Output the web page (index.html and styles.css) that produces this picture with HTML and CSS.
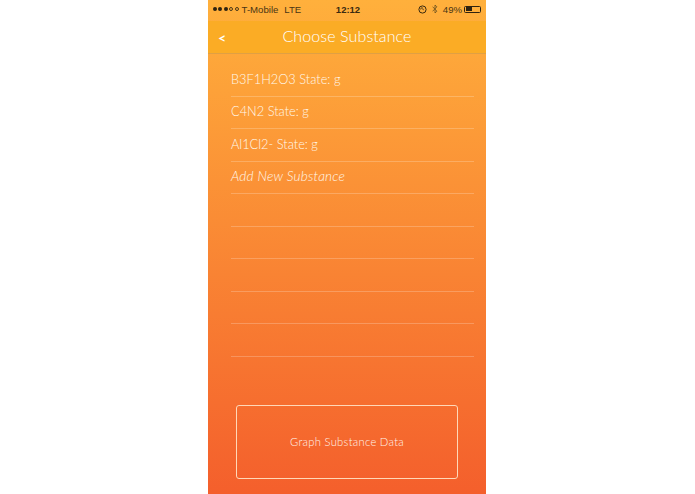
FILE: index.html
```html
<!DOCTYPE html>
<html lang="en">
<head>
<meta charset="utf-8">
<title>Choose Substance</title>
<link rel="stylesheet" href="styles.css">
</head>
<body>
<main class="phone">
  <div class="status">
    <div class="status-left">
      <span class="signal"><i class="dot"></i><i class="dot"></i><i class="dot"></i><i class="dot off"></i><i class="dot off"></i></span>
      <span class="carrier">T-Mobile</span>
      <span class="network">LTE</span>
    </div>
    <div class="clock">12:12</div>
    <div class="status-right">
      <svg class="lock" viewBox="0 0 9 9" width="9" height="9"><circle cx="4.5" cy="4.5" r="3.6" fill="none" stroke="#3a2a10" stroke-width="1"/><path d="M4.5 2.4v2.1l1.6 1z" fill="#3a2a10"/><path d="M2.6 4.5a1.9 1.9 0 0 1 1.9-1.9" fill="none" stroke="#3a2a10" stroke-width=".8"/></svg>
      <svg class="bt" viewBox="0 0 6 10" width="6" height="10"><path d="M.6 2.7l4.3 4.5L3 9V1l1.9 1.8L.6 7.3" fill="none" stroke="#6b5020" stroke-width=".8"/></svg>
      <span class="pct">49%</span>
      <span class="battery"><span class="battery-fill"></span></span>
    </div>
  </div>
  <header class="nav">
    <span class="back">&lt;</span>
    <h1 class="title">Choose Substance</h1>
  </header>
  <ul class="list">
    <li class="row">B3F1H2O3 State: g</li>
    <li class="row">C4N2 State: g</li>
    <li class="row">Al1Cl2- State: g</li>
    <li class="row add">Add New Substance</li>
    <li class="row"></li>
    <li class="row"></li>
    <li class="row"></li>
    <li class="row"></li>
    <li class="row"></li>
  </ul>
  <div class="action">
    <button class="graph" type="button">Graph Substance Data</button>
  </div>
</main>
</body>
</html>
```
FILE: styles.css
```css
* { box-sizing: border-box; }
html, body { margin: 0; padding: 0; height: 100%; background: #fff; }
body { display: flex; justify-content: center; overflow: hidden; }
.phone {
  width: 278px;
  height: 494px;
  margin-right: 1px;
  display: flex;
  flex-direction: column;
  font-family: Lato, "Liberation Sans", sans-serif;
  color: #fff;
  background: linear-gradient(180deg, #ffb03c 0%, #f45f2c 100%);
}
.status {
  height: 21px;
  padding: 0 4px 3px 4px;
  display: grid;
  grid-template-columns: 1fr auto 1fr;
  align-items: center;
  font-family: "Liberation Sans", sans-serif;
  font-size: 9.6px;
  color: #4a3514;
}
.status-left { display: flex; align-items: center; }
.signal { display: flex; gap: 1.4px; margin: 0 3px 0 1px; }
.dot { width: 4px; height: 4px; border-radius: 50%; background: #2e2210; }
.dot.off { background: transparent; border: .6px solid #4a3818; }
.network { margin-left: 6px; }
.clock { font-weight: 700; font-size: 9.5px; color: #3a2a10; padding-left: 2px; }
.status-right { display: flex; align-items: center; justify-content: flex-end; gap: 3px; padding-right: 1px; }
.bt { margin: 0 2px 0 2px; }
.pct { font-size: 9.6px; }
.battery { width: 17px; height: 7px; border: .8px solid #2e2210; border-radius: 1.5px; display: block; margin-left: -1px; padding: .6px; }
.battery-fill { display: block; width: 48%; height: 100%; background: #2e2210; }
.nav {
  height: 33px;
  padding: 0 10px;
  position: relative;
  display: flex;
  align-items: center;
  justify-content: center;
  background: #fbac25;
  border-bottom: 1px solid #e0a043;
}
.back { position: absolute; left: 10px; top: 8px; font-size: 14px; font-weight: 700; }
.title { margin: 0 0 4px; font-size: 16px; font-weight: 300; letter-spacing: .1px; }
.list { list-style: none; margin: 10px 12px 0 23px; padding: 0; }
.row {
  height: 32.5px;
  padding-bottom: 2px;
  display: flex;
  align-items: center;
  font-size: 12.8px;
  font-weight: 300;
  color: #fff8ec;
  border-bottom: 1px solid rgba(255, 255, 255, .22);
}
.add { font-style: italic; font-size: 13.6px; letter-spacing: .2px; }
.action { flex: 1; display: flex; align-items: flex-end; padding: 0 28px 15px; }
.graph {
  width: 222px;
  height: 74px;
  padding: 0 0 2px;
  background: transparent;
  border: 1px solid #ffd8b8;
  border-radius: 3px;
  color: #fff3ea;
  font: 300 11.2px Lato, "Liberation Sans", sans-serif;
  letter-spacing: .3px;
}
```
